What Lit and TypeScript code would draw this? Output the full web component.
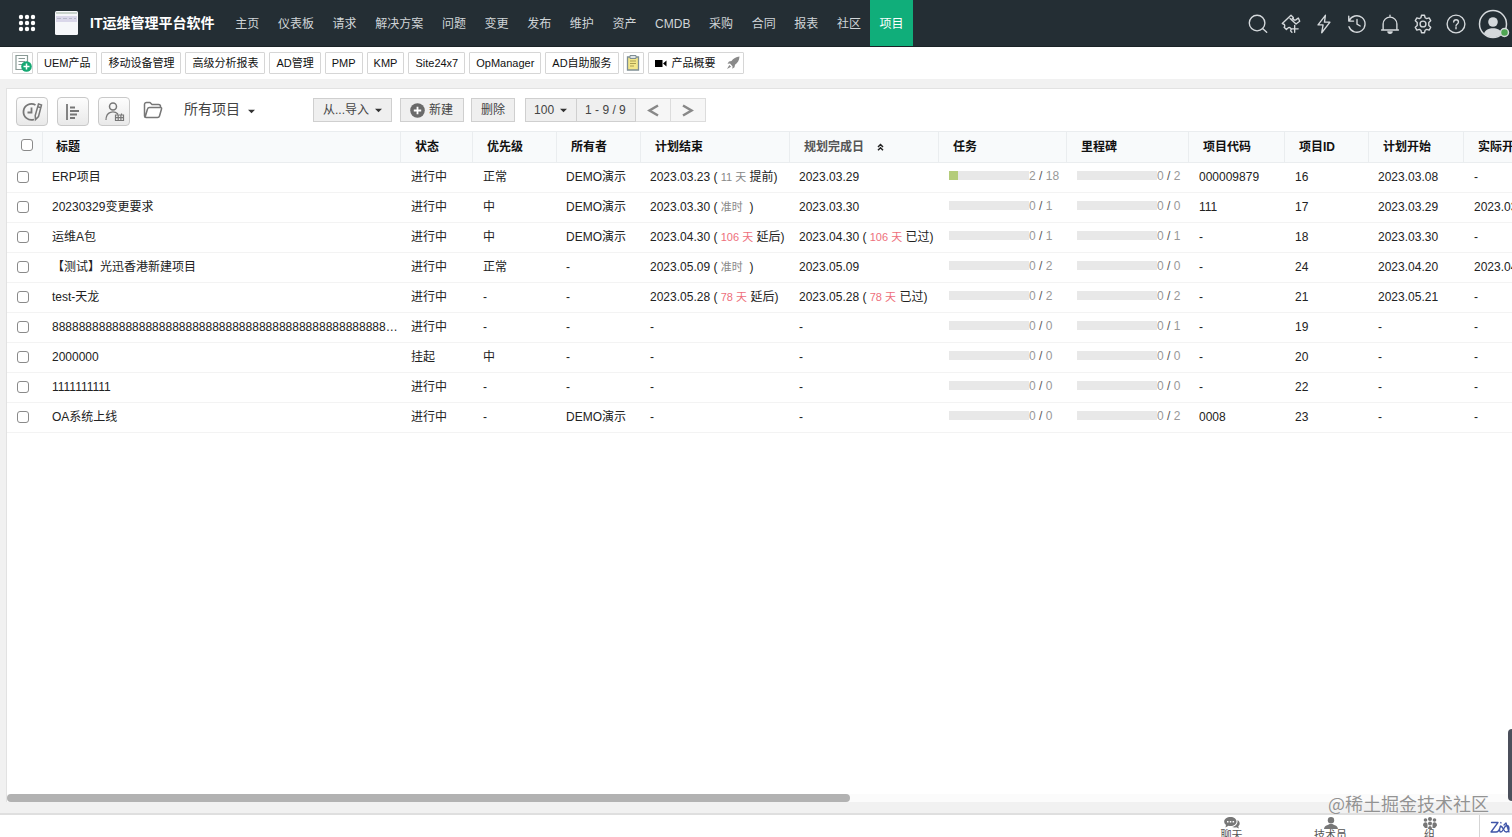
import { LitElement, html, css, svg } from "lit";
import { customElement, state } from "lit/decorators.js";
import { classMap } from "lit/directives/class-map.js";
import { styleMap } from "lit/directives/style-map.js";

type Note = { days?: number; text: string; tone: "early" | "ontime" | "late" };
type Project = {
  title: string;
  status: string;
  priority: string;
  owner: string;
  end: string;
  endNote?: Note;
  due: string;
  dueNote?: Note;
  tasks: [number, number];
  milestones: [number, number];
  code: string;
  id: number;
  start: string;
  actual: string;
};

const MODULES = ["主页", "仪表板", "请求", "解决方案", "问题", "变更", "发布", "维护", "资产", "CMDB", "采购", "合同", "报表", "社区", "项目"];
const LINKS = ["UEM产品", "移动设备管理", "高级分析报表", "AD管理", "PMP", "KMP", "Site24x7", "OpManager", "AD自助服务"];
const COLUMNS = ["标题", "状态", "优先级", "所有者", "计划结束", "规划完成日", "任务", "里程碑", "项目代码", "项目ID", "计划开始", "实际开始"];

const PROJECTS: Project[] = [
  { title: "ERP项目", status: "进行中", priority: "正常", owner: "DEMO演示", end: "2023.03.23", endNote: { days: 11, text: "提前", tone: "early" }, due: "2023.03.29", tasks: [2, 18], milestones: [0, 2], code: "000009879", id: 16, start: "2023.03.08", actual: "-" },
  { title: "20230329变更要求", status: "进行中", priority: "中", owner: "DEMO演示", end: "2023.03.30", endNote: { text: "准时", tone: "ontime" }, due: "2023.03.30", tasks: [0, 1], milestones: [0, 0], code: "111", id: 17, start: "2023.03.29", actual: "2023.03.29" },
  { title: "运维A包", status: "进行中", priority: "中", owner: "DEMO演示", end: "2023.04.30", endNote: { days: 106, text: "延后", tone: "late" }, due: "2023.04.30", dueNote: { days: 106, text: "已过", tone: "late" }, tasks: [0, 1], milestones: [0, 1], code: "-", id: 18, start: "2023.03.30", actual: "-" },
  { title: "【测试】光迅香港新建项目", status: "进行中", priority: "正常", owner: "-", end: "2023.05.09", endNote: { text: "准时", tone: "ontime" }, due: "2023.05.09", tasks: [0, 2], milestones: [0, 0], code: "-", id: 24, start: "2023.04.20", actual: "2023.04.20" },
  { title: "test-天龙", status: "进行中", priority: "-", owner: "-", end: "2023.05.28", endNote: { days: 78, text: "延后", tone: "late" }, due: "2023.05.28", dueNote: { days: 78, text: "已过", tone: "late" }, tasks: [0, 2], milestones: [0, 2], code: "-", id: 21, start: "2023.05.21", actual: "-" },
  { title: "8".repeat(52), status: "进行中", priority: "-", owner: "-", end: "-", due: "-", tasks: [0, 0], milestones: [0, 1], code: "-", id: 19, start: "-", actual: "-" },
  { title: "2000000", status: "挂起", priority: "中", owner: "-", end: "-", due: "-", tasks: [0, 0], milestones: [0, 0], code: "-", id: 20, start: "-", actual: "-" },
  { title: "1111111111", status: "进行中", priority: "-", owner: "-", end: "-", due: "-", tasks: [0, 0], milestones: [0, 0], code: "-", id: 22, start: "-", actual: "-" },
  { title: "OA系统上线", status: "进行中", priority: "-", owner: "DEMO演示", end: "-", due: "-", tasks: [0, 0], milestones: [0, 2], code: "0008", id: 23, start: "-", actual: "-" },
];

const TOP_ICONS = [
  { name: "搜索", art: svg`<circle cx="11" cy="11" r="8.5"/><path d="M17 17l4.500 4"/>` },
  { name: "新建请求", art: svg`<path d="M13 21l-1.500-1.500a2 2 0 0 0-3-3L7 18l-2.500-2.500a2 2 0 0 0-1-3.500L2.500 11.500 12 2.500l2.500 2.500a2 2 0 0 0 2.800 2.500L20 5.500 21.500 9l-4 3M11 6l6.500 6M14.500 5l-2 2.500"/><path d="M16 13.500v7.500M12.300 17.300h7.500"/>` },
  { name: "快捷操作", art: svg`<path d="M13.500 2.500L5.500 13h5.500l-1.500 8.500L18.500 10h-6z"/>` },
  { name: "历史记录", art: svg`<path d="M3.500 8.500A9 9 0 1 1 3.300 15M3 3.500v5.300h5.300M12 7v5.200l3.500 2"/>` },
  { name: "通知", art: svg`<path d="M12 2.500v2M4.500 18.500V12a7.500 7.500 0 0 1 15 0v6.500M2.800 18.500h18.400"/><path class="solid" d="M9 20h6a3 3 0 0 1-6 0z"/>` },
  { name: "设置", art: svg`<path d="M9.700 5.200L10.300 2.500h3.400l.6 2.700 1.700 1 2.700-.8 1.700 3-2.100 1.900v3.400l2.100 1.900-1.700 3-2.700-.8-1.700 1-.6 2.700h-3.400l-.6-2.700-1.700-1-2.700.8-1.700-3 2.100-1.900v-3.400L3.600 8.400l1.700-3 2.700.8z"/><circle cx="12" cy="12" r="3.200"/>` },
  { name: "帮助", art: svg`<circle cx="12" cy="12" r="9.700"/><path d="M9.500 9.800c0-3.300 5.200-3.300 5.200 0 0 2.200-2.700 2.200-2.700 4.500M12 15.800v1.500"/>` },
];

const caret = html`<svg class="caret" viewBox="0 0 8 5" aria-hidden="true"><path d="M0 .5h8L4 4.500z" /></svg>`;

@customElement("app-root")
export class AppRoot extends LitElement {
  @state() private active = "项目";
  @state() private selected = new Set<number>();

  static styles = css`
    :host {
      display: flex;
      flex-direction: column;
      height: 100vh;
      overflow: hidden;
      position: relative;
      background: #f1f1f1;
      color: #222;
      font: 12px/18px "Liberation Sans", "Noto Sans CJK SC", sans-serif;
    }
    * { box-sizing: border-box; }
    button, select { font: inherit; color: inherit; margin: 0; }
    a { color: inherit; text-decoration: none; }
    svg { display: block; flex: none; }

    .topbar {
      display: flex;
      flex: none;
      height: 47px;
      padding: 0 2px 0 17px;
      background: #242e34;
      border-bottom: 1px solid #1a2226;
      color: #d0d5d8;
    }
    .apps, .tool { border: 0; background: none; padding: 0; display: grid; place-items: center; }
    .apps { width: 20px; }
    .apps svg { width: 18px; height: 18px; fill: #fff; }
    .brand { display: flex; align-items: center; gap: 12px; margin-left: 18px; width: 171px; white-space: nowrap; }
    .brand svg { width: 23px; height: 24px; }
    .brand h1 { margin: 0; font-size: 14px; line-height: 20px; color: #fff; }
    .modules { display: flex; width: 687px; }
    .modules a { flex: 1 0 auto; padding: 2px 9px 0; display: grid; place-items: center; white-space: nowrap; }
    .modules a.on { background: #10ae7a; color: #fff; }
    .tools { display: flex; align-items: center; gap: 11px; margin-left: auto; padding-top: 2px; }
    .tool svg { width: 22px; height: 22px; fill: none; stroke: #d5d9dc; stroke-width: 1.5; stroke-linecap: round; stroke-linejoin: round; }
    .tool .solid { fill: #d5d9dc; stroke: none; }
    .tool.avatar svg { width: 32px; height: 32px; }

    .links { display: flex; flex: none; gap: 4px; align-items: center; height: 32px; padding: 0 12px; background: #fff; font-size: 11px; }
    .links a, .links button { height: 22px; border: 1px solid #d6d6d6; border-radius: 1px; background: #fff; display: flex; align-items: center; padding: 0 6px; white-space: nowrap; color: #111; }
    .links .square { width: 21px; padding: 0; justify-content: center; }
    .links svg { width: 18px; height: 18px; }
    .links .video { gap: 5px; padding: 0 3px 0 6px; }
    .links .cam { width: 12px; height: 10px; }
    .links .rocket { width: 14px; height: 14px; margin-left: 5px; }

    .panel { flex: 1; min-height: 0; margin: 9px 0 0 6px; display: flex; flex-direction: column; background: #fff; border: solid #e2e2e2; border-width: 1px 0 0 1px; }
    .actions { display: flex; align-items: center; height: 42px; padding-left: 9px; flex: none; color: #444; }
    .views { display: flex; gap: 9px; align-items: center; padding-top: 3px; }
    .views button { width: 32px; height: 29px; padding: 0; border: 1px solid #c9c9c9; border-radius: 4px; background: linear-gradient(#fdfdfd, #e9e9e9); display: grid; place-items: center; }
    .views svg { width: 22px; height: 22px; fill: none; stroke: #777; stroke-width: 1.5; }
    .folder { width: 20px; height: 18px; margin: 0 21px 0 13px; fill: none; stroke: #777; stroke-width: 1.5; stroke-linejoin: round; }
    .caret { width: 7px; height: 5px; fill: #333; }
    .pick { display: flex; align-items: center; }
    select { appearance: none; border: 0; background: none; padding: 0; outline: 0; }
    .filter { gap: 8px; width: 129px; }
    .filter select { font-size: 14px; line-height: 20px; padding-bottom: 2px; }
    .filter .caret { margin-top: 3px; }
    .group { display: flex; }
    .btn { height: 24px; border: 1px solid #cfcfcf; background: #efefef; padding: 0 9px; display: flex; align-items: center; justify-content: center; gap: 6px; white-space: nowrap; }
    .btn.create { margin: 0 7px 0 8px; gap: 4px; padding-right: 10px; }
    .create svg { width: 15px; height: 15px; }
    .pager { margin-left: 10px; }
    .pager .btn { padding: 0 9px 0 8px; gap: 5px; }
    .pager .btn + .btn { border-left: 0; }
    .pager .btn.step { width: 35px; padding: 0; background: #f6f6f6; border-color: #dcdcdc; }
    .step svg { width: 12px; height: 13px; fill: none; stroke: #888; stroke-width: 2.5; }

    .grid { flex: 1; min-height: 0; overflow: auto; scrollbar-width: none; }
    table { border-collapse: separate; border-spacing: 0; table-layout: fixed; width: 1556px; min-width: 100%; }
    .c-check { width: 35px; }
    .c-title { width: 358px; }
    .c-status { width: 72px; }
    .c-mid { width: 84px; }
    .c-date { width: 149px; }
    .c-task { width: 128px; }
    .c-mile { width: 122px; }
    .c-code { width: 96px; }
    .c-start { width: 95px; }
    th { height: 32px; padding: 0 0 0 14px; text-align: left; color: #111; background: #f8fafb; border: solid #eaedef; border-width: 1px 0 1px 1px; white-space: nowrap; }
    th:first-child { border-left: 0; }
    th.c-title { padding-left: 13px; }
    td { height: 30px; padding: 0 2px 2px 11px; border-bottom: 1px solid #f3f3f3; white-space: nowrap; overflow: hidden; text-overflow: ellipsis; }
    td.lead { padding-left: 10px; }
    th input { margin-bottom: 4px; }
    .sorted { color: #555; }
    .sort { display: flex; align-items: center; gap: 13px; padding: 0; border: 0; background: none; font-weight: 700; }
    .sort svg { width: 7px; height: 8px; fill: none; stroke: #222; stroke-width: 1.5; }
    input[type="checkbox"] { appearance: none; display: block; width: 12px; height: 12px; margin: 0; border: 1px solid #8a8a8a; border-radius: 3px; background: #fff; }
    input[type="checkbox"]:checked { background: #10ae7a; }
    th input[type="checkbox"] { margin-bottom: 4px; }
    .days { font-size: 11px; color: #888; }
    .days.late { color: #ee6f7c; }
    .progress { display: flex; align-items: center; color: #999; padding-bottom: 2px; }
    .track { width: 80px; height: 9px; background: #e8e8e8; display: block; }
    .fill { display: block; height: 100%; background: #b4cc7a; }
    .slash { color: #555; }

    .scroll { flex: none; height: 8px; background: #fbfbfb; }
    .thumb { width: 56%; height: 8px; border-radius: 4px; background: #b2b2b2; }

    .footer { display: flex; flex: none; height: 24px; margin-top: 11px; border-top: 2px solid #dfdfdf; background: #fff; color: #555; overflow: hidden; justify-content: flex-end; align-items: flex-start; font-size: 11px; line-height: 12px; }
    .footer button { border: 0; background: none; padding: 2px 0 0; width: 99px; display: flex; flex-direction: column; align-items: center; font: inherit; white-space: nowrap; }
    .footer .dock svg { width: 16px; height: 12px; fill: #777; }
    .footer .zia { width: 33px; height: 24px; padding: 5px 2px 0 0; border-left: 1px solid #d5d5d5; align-items: flex-end; }
    .zia svg { width: 20px; height: 14px; fill: none; stroke: #3f55a8; stroke-width: 1.3; stroke-linecap: round; stroke-linejoin: round; }

    .watermark { position: absolute; right: 23px; bottom: 22px; font: 18px/24px "Noto Sans CJK SC", sans-serif; color: #939393; text-shadow: 0 0 1px #fff; pointer-events: none; }
    .handle { position: absolute; right: 0; bottom: 36px; width: 4px; height: 72px; border: 0; padding: 0; border-radius: 4px 0 0 4px; background: #4b4f5b; }
  `;

  private toggle(id: number) {
    const next = new Set(this.selected);
    next.has(id) ? next.delete(id) : next.add(id);
    this.selected = next;
  }

  private toggleAll(on: boolean) {
    this.selected = new Set(on ? PROJECTS.map((p) => p.id) : []);
  }

  private date(value: string, note?: Note) {
    if (!note) return value;
    return note.days
      ? html`${value} ( <span class="days ${note.tone}">${note.days} 天</span> ${note.text})`
      : html`${value} ( <span class="days">${note.text}</span>&nbsp; )`;
  }

  private progress([done, total]: [number, number]) {
    const width = total ? `${(done / total) * 100}%` : "0";
    return html`<div class="progress"><span class="track"><span class="fill" style=${styleMap({ width })}></span></span><span>${done} <span class="slash">/</span> ${total}</span></div>`;
  }

  private heading(label: string) {
    const kinds: Record<string, string> = { 标题: "c-title", 状态: "c-status", 计划结束: "c-date", 规划完成日: "c-date sorted", 任务: "c-task", 里程碑: "c-mile", 项目代码: "c-code", 计划开始: "c-start", 实际开始: "" };
    const kind = kinds[label] ?? "c-mid";
    return label === "规划完成日"
      ? html`<th class=${kind} aria-sort="ascending"><button class="sort">${label}<svg viewBox="0 0 7 8"><path d="M1 4l2.500-2.500L6 4M1 7.300l2.500-2.500L6 7.300" /></svg></button></th>`
      : html`<th class=${kind}>${label}</th>`;
  }

  render() {
    return html`
      <header class="topbar">
        <button class="apps" aria-label="应用">
          <svg viewBox="0 0 18 18">${[3, 9, 15].map((y) => [3, 9, 15].map((x) => svg`<circle cx=${x} cy=${y} r="2.200"/>`))}</svg>
        </button>
        <div class="brand">
          <svg viewBox="0 0 23 24"><rect width="23" height="24" rx="1.500" fill="#f6f7fa"/><path fill="#c9d3cc" d="M1 1h21v2H1z"/><path fill="#dad7ea" d="M1 5h21v6H1z"/><path stroke="#b5b8c8" d="M2 7.500h4M8 7.500h4M14 7.500h3M19 7.500h2"/></svg>
          <h1>IT运维管理平台软件</h1>
        </div>
        <nav class="modules">
          ${MODULES.map((m) => html`<a href="#" class=${classMap({ on: m === this.active })} @click=${(e: Event) => { e.preventDefault(); this.active = m; }}>${m}</a>`)}
        </nav>
        <div class="tools">
          ${TOP_ICONS.map((i) => html`<button class="tool" aria-label=${i.name}><svg viewBox="0 0 24 24">${i.art}</svg></button>`)}
          <button class="tool avatar" aria-label="账户">
            <svg viewBox="0 0 32 32"><circle cx="15" cy="16" r="13.500"/><circle class="solid" cx="15" cy="14" r="4.800"/><path class="solid" d="M6 25.500c2-7 16-7 18 0-4.500 5-13.500 5-18 0z"/><circle cx="26.500" cy="24.500" r="4" fill="#4fa653" stroke="#d5d9dc"/></svg>
          </button>
        </div>
      </header>

      <nav class="links">
        <button class="square" aria-label="新增快捷方式">
          <svg viewBox="0 0 18 18" fill="none"><path d="M10 15.500H2V1.500h11.500V8M4.500 4.500H11M4.500 7.500H11M4.500 10.500h4" stroke="#8a9a96" stroke-width="1.200"/><circle cx="12.500" cy="12.500" r="5.300" fill="#15a873"/><path d="M12.500 9.500v6M9.500 12.500h6" stroke="#fff" stroke-width="1.500"/></svg>
        </button>
        ${LINKS.map((l) => html`<a href="#">${l}</a>`)}
        <button class="square" aria-label="便签">
          <svg viewBox="0 0 18 18" fill="none"><path d="M3.500 3h11v13h-11z" fill="#f3e78a" stroke="#7f8e94" stroke-width="1.300"/><path d="M6 1.500h6v3H6z" fill="#dfe4e6" stroke="#7f8e94"/><path d="M6 7h6M6 9.500h6M6 12h4" stroke="#a99d50"/></svg>
        </button>
        <a class="video" href="#">
          <svg class="cam" viewBox="0 0 12 10"><path d="M0 2h7.500v7H0zM8 5.500l3.500-3v6z"/></svg>产品概要
          <svg class="rocket" viewBox="0 0 14 14" fill="#8a8a8a"><path d="M13.500.5C10 .8 7.300 2.600 5.500 5L3 5.500 1.500 7.800l2.500-.2 2.500 2.600-.2 2.500 2.200-1.500L9 8.700C11.500 7 13.300 4.500 13.500.5zM3.300 9l1.800 1.800L1 13z"/></svg>
        </a>
      </nav>

      <main class="panel">
        <div class="actions">
          <div class="views">
            <button aria-label="时间视图"><svg viewBox="0 0 22 22"><path d="M14.500 4A8 8 0 1 0 13 18.500M10.500 6.500v5H6.500" stroke-width="1.800"/><path d="M17.500 3l3 1L17.500 15.500l-3 3-.3-4zM16.800 5.800l3 .9"/></svg></button>
            <button aria-label="甘特图"><svg viewBox="0 0 22 22"><path d="M5 3v16" stroke-width="1.800"/><path d="M8 6.500h5M8 10h9M8 13.500h7M8 17h5" stroke-width="2"/></svg></button>
            <button aria-label="资源"><svg viewBox="0 0 22 22"><circle cx="10" cy="5.500" r="3.500"/><path d="M3 19c0-9 8-9.500 12-6M12.500 14h8v5.500h-8zM14.500 12.500V14M18.500 12.500V14M12.500 16.700h8M15.200 14v5.500M17.900 14v5.500" stroke-width="1.200"/></svg></button>
          </div>
          <svg class="folder" viewBox="0 0 20 18"><path d="M1.500 15V3.500a2 2 0 0 1 2-2H7l2 2h6.500a2 2 0 0 1 2 2v1M2 16.500L4.500 8q.4-1.500 2-1.500h11q1.500 0 1 1.500l-2 7q-.4 1.500-2 1.500H3q-1.500 0-1.500-1.500"/></svg>
          <label class="pick filter"><select aria-label="项目筛选"><option>所有项目</option></select>${caret}</label>
          <div class="group">
            <button class="btn">从...导入 ${caret}</button>
            <button class="btn create"><svg viewBox="0 0 15 15"><circle cx="7.500" cy="7.500" r="7.300" fill="#6a6a6a"/><path d="M7.500 3.800v7.400M3.800 7.500h7.400" stroke="#fff" stroke-width="1.800"/></svg>新建</button>
            <button class="btn">删除</button>
          </div>
          <div class="group pager">
            <label class="btn"><select aria-label="每页数量"><option>100</option></select>${caret}</label>
            <span class="btn">1 - 9 / 9</span>
            <button class="btn step" aria-label="上一页"><svg viewBox="0 0 12 13"><path d="M11 1.500L2.500 6.500 11 11.500"/></svg></button>
            <button class="btn step" aria-label="下一页"><svg viewBox="0 0 12 13"><path d="M1 1.500l8.500 5-8.500 5"/></svg></button>
          </div>
        </div>

        <div class="grid">
          <table>
            <thead>
              <tr>
                <th class="c-check"><input type="checkbox" aria-label="全选" .checked=${this.selected.size === PROJECTS.length} @change=${(e: Event) => this.toggleAll((e.target as HTMLInputElement).checked)} /></th>
                ${COLUMNS.map((c) => this.heading(c))}
              </tr>
            </thead>
            <tbody>
              ${PROJECTS.map((p) => html`
                <tr>
                  <td class="lead"><input type="checkbox" aria-label=${`选择项目 ${p.id}`} .checked=${this.selected.has(p.id)} @change=${() => this.toggle(p.id)} /></td>
                  <td class="lead">${p.title}</td>
                  <td>${p.status}</td>
                  <td>${p.priority}</td>
                  <td class="lead">${p.owner}</td>
                  <td class="lead">${this.date(p.end, p.endNote)}</td>
                  <td class="lead">${this.date(p.due, p.dueNote)}</td>
                  <td>${this.progress(p.tasks)}</td>
                  <td>${this.progress(p.milestones)}</td>
                  <td>${p.code}</td>
                  <td>${p.id}</td>
                  <td class="lead">${p.start}</td>
                  <td>${p.actual}</td>
                </tr>`)}
            </tbody>
          </table>
        </div>
        <div class="scroll"><div class="thumb"></div></div>
      </main>

      <footer class="footer">
        <button class="dock"><svg viewBox="0 0 16 12"><path d="M6.500 0C10 0 12.500 2 12.500 4.500S10 9 6.500 9q-1 0-2-.3L1.500 10.500 2 7.800C.8 7 .2 6 .2 4.500.2 2 3 0 6.500 0z"/><path d="M13.500 3c2.500 1.500 3 4.500.8 6.200l.5 2.300-2.500-1.300q-2.300.6-4.300-.2c3.500-.5 6-3 5.500-7z"/><path fill="#fff" d="M3 4h1.500v1.500H3zM5.800 4h1.500v1.500H5.800zM8.600 4h1.500v1.500H8.600z"/></svg>聊天</button>
        <button class="dock"><svg viewBox="0 0 16 12"><circle cx="8" cy="3.200" r="3.200"/><path d="M1 12c.5-4 4-3.500 5.500-5h3C11 8.500 14.500 8 15 12z"/></svg>技术员</button>
        <button class="dock"><svg viewBox="0 0 16 12"><circle cx="8" cy="2" r="2"/><circle cx="3.500" cy="3" r="1.800"/><circle cx="12.500" cy="3" r="1.800"/><circle cx="8" cy="6.500" r="2"/><path d="M1 8.500c0-4 4.500-4 4.500-1V11H3zM15 8.500c0-4-4.500-4-4.500-1V11H13zM6 12c0-4 4-4 4 0z"/></svg>组</button>
        <button class="zia" aria-label="Zia"><svg viewBox="0 0 20 14"><path d="M1.500 2.500H8L1 12h5c2.500 0 3.800-3 4.300-5.500-1 3-1 5.500.5 5.500 2.400 0 3.200-6.500 6-6.500 1.500 0 2.200 1.500 2.200 3.300 0 2-1 3.200-2.700 3.200-3 0-3-6-5.800-6M10.800 2.500l.2.500M14 5l2-2 3 9"/></svg></button>
      </footer>

      <button class="handle" aria-label="展开侧栏"></button>
      <div class="watermark">@稀土掘金技术社区</div>
    `;
  }
}
